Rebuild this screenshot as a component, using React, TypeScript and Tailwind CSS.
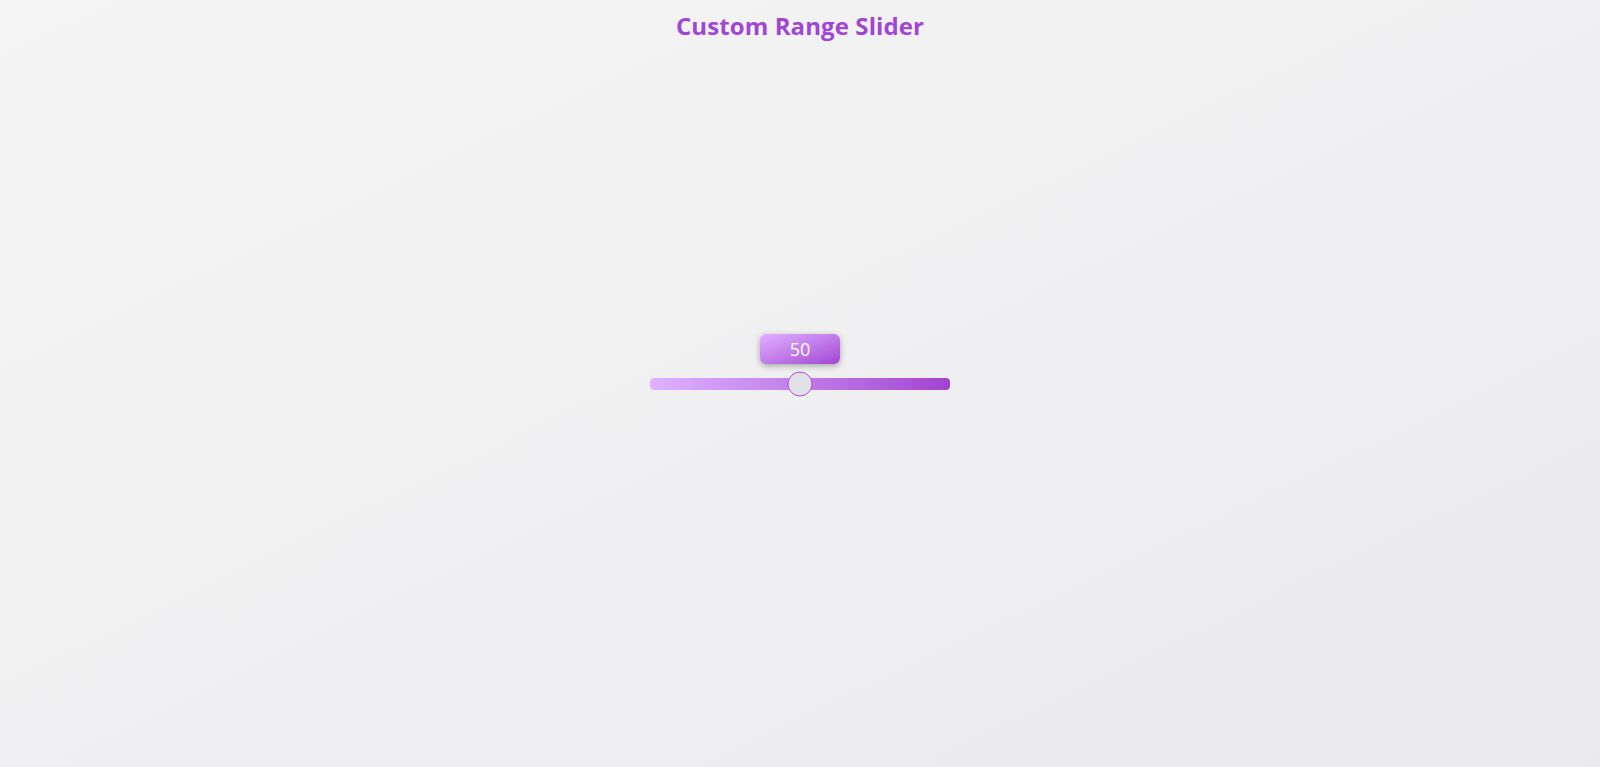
import { useState } from 'react'

export default function App() {
  const [value, setValue] = useState(50)
  const pct = value / 100

  return (
    <main
      className="flex h-screen flex-col bg-gradient-to-br from-[#f5f5f6] to-[#eaeaec]"
      style={{ fontFamily: '"Segoe UI", "Open Sans", "Noto Sans", sans-serif' }}
    >
      <h1 className="h-[52px] pt-[10px] text-center text-[24px] font-bold leading-[32px] tracking-[0.1px] text-[#a046d2]">
        Custom Range Slider
      </h1>

      <div className="flex flex-1 items-center justify-center">
        <div className="relative h-[12px] w-[300px] rounded-[4px] bg-gradient-to-r from-[#e0b2ff] to-[#a142d2]">
          {/* value bubble */}
          <div
            className="absolute bottom-[26px] flex h-[30px] w-[80px] -translate-x-1/2 items-center justify-center rounded-md bg-gradient-to-br from-[#e2b0ff] to-[#a244d4] text-[18px] leading-none text-white shadow-[0_2px_6px_rgba(0,0,0,0.3)]"
            style={{ left: `${pct * 100}%` }}
          >
            {value}
          </div>
          <div
            className="absolute top-1/2 h-[25px] w-[25px] -translate-x-1/2 -translate-y-1/2 rounded-full border border-[#b548e0] bg-[#dfe1e5]"
            style={{ left: `${pct * 100}%` }}
          />
          <input
            type="range"
            min={0}
            max={100}
            value={value}
            onChange={e => setValue(Number(e.target.value))}
            className="absolute inset-0 h-full w-full cursor-pointer opacity-0"
          />
        </div>
      </div>

      <div className="h-[52px]" />
    </main>
  )
}
